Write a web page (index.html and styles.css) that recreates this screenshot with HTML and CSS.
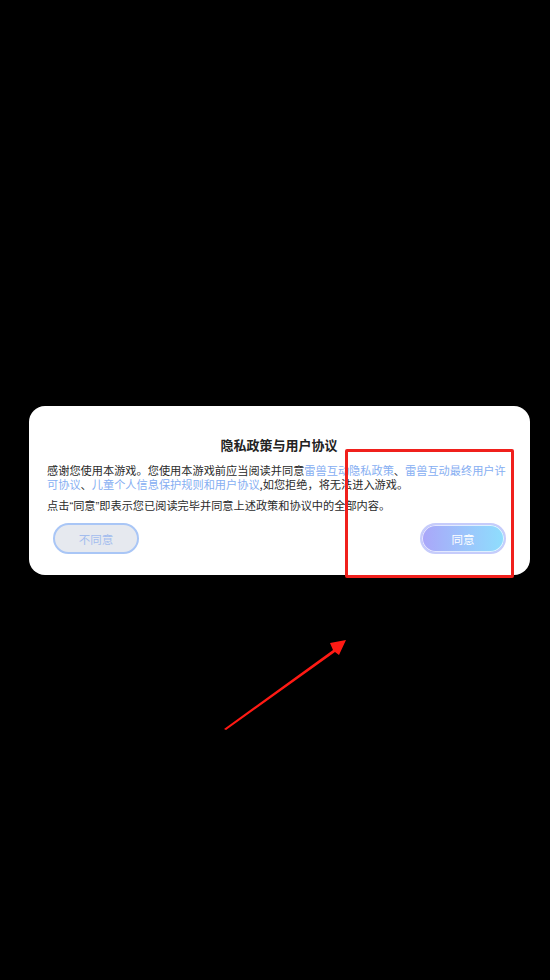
FILE: index.html
```html
<!DOCTYPE html>
<html lang="zh-CN">
<head>
<meta charset="utf-8">
<title>隐私政策与用户协议</title>
<link rel="stylesheet" href="styles.css">
</head>
<body>
<div class="screen">
  <div class="card">
    <h1 class="title">隐私政策与用户协议</h1>
    <p class="text">感谢您使用本游戏。您使用本游戏前应当阅读并同意<span class="link">雷兽互动隐私政策</span>、<span class="link">雷兽互动最终用户许可协议</span>、<span class="link">儿童个人信息保护规则和用户协议</span>,如您拒绝，将无法进入游戏。</p>
    <p class="text">点击<span class="quote">“</span>同意<span class="quote">”</span>即表示您已阅读完毕并同意上述政策和协议中的全部内容。</p>
    <div class="actions">
      <button class="btn btn-decline">不同意</button>
      <button class="btn btn-accept">同意</button>
    </div>
  </div>
  <div class="highlight"></div>
  <svg class="arrow" width="550" height="980" viewBox="0 0 550 980">
    <path d="M224 729 L333 650 L330 643 L346 640 L339 655 L335 652 L226 730 Z" fill="#ff1a14"/>
  </svg>
</div>
</body>
</html>
```
FILE: styles.css
```css
html, body {
  margin: 0;
  padding: 0;
  background: #000;
}
body {
  font-family: "Noto Sans CJK SC", "Noto Sans", sans-serif;
  width: 550px;
  height: 980px;
  overflow: hidden;
}
.screen {
  position: relative;
  width: 550px;
  height: 980px;
  padding-top: 406px;
  box-sizing: border-box;
}
.card {
  margin-left: 29px;
  width: 501px;
  box-sizing: border-box;
  background: #fff;
  border-radius: 16px;
  padding: 30px 19px 21px 18px;
}
.title {
  margin: 0;
  font-size: 13px;
  line-height: 18px;
  font-weight: 700;
  text-align: center;
  color: #222;
}
.text {
  margin: 0;
  font-size: 11.2px;
  line-height: 14px;
  color: #2a2a2a;
}
.quote {
  font-family: "Liberation Sans", sans-serif;
}
.title + .text {
  margin-top: 9px;
}
.text + .text {
  margin-top: 7px;
}
.link {
  color: #86aef2;
}
.actions {
  display: flex;
  justify-content: space-between;
  margin-top: 10px;
  padding: 0 5px 0 6px;
}
.btn {
  width: 86px;
  height: 31px;
  border-radius: 16px;
  font-family: inherit;
  font-size: 11.5px;
  padding: 0;
  box-sizing: border-box;
}
.btn-decline {
  background: #e6e9ef;
  border: 2px solid #a9c6f6;
  color: #a3bdee;
}
.btn-accept {
  background: linear-gradient(90deg, #aaa6f9 0%, #9cc3fb 50%, #8edefd 100%);
  border: 2px solid #c6ccfb;
  box-shadow: inset 0 0 0 1px rgba(255,255,255,0.7);
  color: #fff;
}
.highlight {
  position: absolute;
  left: 345px;
  top: 449px;
  width: 169px;
  height: 129px;
  box-sizing: border-box;
  border: 3px solid #f0201c;
  border-radius: 2px;
}
.arrow {
  position: absolute;
  left: 0;
  top: 0;
}
```
